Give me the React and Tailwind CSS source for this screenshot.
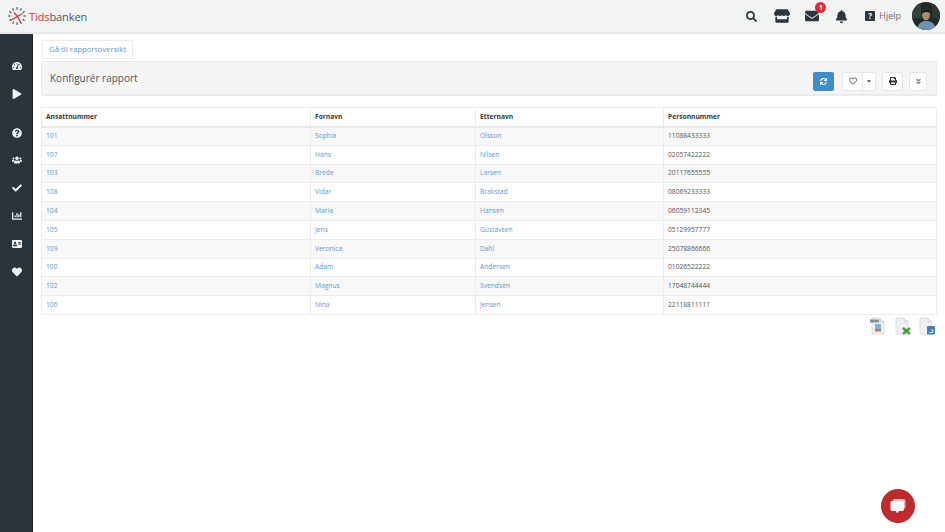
import React from 'react';
import {
  FaSearch, FaStore, FaEnvelope, FaBell, FaTachometerAlt, FaPlay, FaQuestionCircle, FaUsers,
  FaCheck, FaChartBar, FaAddressCard, FaHeart, FaSync, FaRegHeart, FaCaretDown, FaPrint, FaAngleDoubleDown,
} from 'react-icons/fa';

const rows = [
  ['101', 'Sophia', 'Olsson', '11088433333'],
  ['107', 'Hans', 'Nilsen', '02057422222'],
  ['103', 'Brede', 'Larsen', '20117655555'],
  ['108', 'Vidar', 'Brakstad', '08069233333'],
  ['104', 'Maria', 'Hansen', '06059112345'],
  ['105', 'Jens', 'Gustavsen', '05129957777'],
  ['109', 'Veronica', 'Dahl', '25078866666'],
  ['100', 'Adam', 'Andersen', '01026522222'],
  ['102', 'Magnus', 'Svendsen', '17048744444'],
  ['106', 'Nina', 'Jensen', '22118811111'],
];

const Logo = () => (
  <svg width="18" height="18" viewBox="0 0 18 18" className="shrink-0">
    {[0, 30, 60, 90, 120, 150, 180, 210, 240, 270, 300, 330].map((a) => (
      <rect key={a} x="8.4" y="0.2" width="1.2" height="2.4" fill="#4b5157" transform={`rotate(${a} 9 9)`} />
    ))}
    <path d="M2.5 13.5 L14.5 6.5 M9.5 9.5 L12.5 15 M9.5 9.5 L6 5.5" stroke="#d8323c" strokeWidth="1.3" fill="none" />
  </svg>
);

const Avatar = () => (
  <svg width="28" height="28" viewBox="0 0 28 28" className="rounded-full shrink-0">
    <rect width="28" height="28" fill="#1f2a26" />
    <rect x="0" y="0" width="9" height="16" fill="#33423a" />
    <rect x="20" y="2" width="8" height="14" fill="#2b3a30" />
    <path d="M5 28 C6 21 10 19 14 19 C19 19 23 21 24 28 Z" fill="#6d94b4" />
    <ellipse cx="14" cy="13" rx="4" ry="5.2" fill="#a98a72" />
    <path d="M9.6 12 C9.5 7 18 6.5 18.6 11 C16 9.5 12 9.5 9.6 12 Z" fill="#18140f" />
  </svg>
);

const FileIcon = ({ children, fold = '#e4e6e8' }) => (
  <svg width="19" height="18" viewBox="0 0 19 18">
    <path d="M3 1 H11 L15 5 V17 H3 Z" fill="#eef0f1" stroke="#d5d8da" strokeWidth="0.8" />
    <path d="M11 1 V5 H15" fill={fold} stroke="#c9cdd0" strokeWidth="0.6" />
    {children}
  </svg>
);

const SideIcon = ({ icon: Icon, className = '' }) => (
  <div className={`flex justify-center text-[#f2f3f4] pl-px ${className}`}>
    <Icon className="text-[10px]" />
  </div>
);

const ToolBtn = ({ children, className = '' }) => (
  <button className={`h-[19px] flex items-center justify-center bg-white border border-[#e6e6e6] rounded-[2px] text-[#55595c] ${className}`}>
    {children}
  </button>
);

export default function App() {
  return (
    <div className="w-[945px] h-[532px] overflow-hidden bg-white flex flex-col relative font-['Open_Sans',sans-serif] text-[7px]">
      <header className="h-[34px] shrink-0 bg-[#f2f3f3] border-b-2 border-[#e7e7e7] flex items-center pl-[8px] pr-[5px]">
        <Logo />
        <div className="ml-[3px] text-[11px] font-medium leading-none tracking-[-0.1px]">
          <span className="text-[#d8323c]">Tids</span>
          <span className="text-[#4f555b]">banken</span>
        </div>
        <div className="ml-auto flex items-center text-[#2a3640]">
          <FaSearch className="text-[11px]" />
          <FaStore className="text-[16px] ml-[17px]" />
          <div className="relative ml-[15px]">
            <FaEnvelope className="text-[14px]" />
            <span className="absolute -top-[7px] -right-[7px] w-[11px] h-[11px] rounded-full bg-[#e02a3a] text-white text-[6.5px] font-bold flex items-center justify-center">1</span>
          </div>
          <FaBell className="text-[13px] ml-[16px]" />
          <div className="ml-[17px] w-[10px] h-[10px] rounded-[1px] bg-[#2a3640] text-white text-[8px] font-bold leading-none flex items-center justify-center">?</div>
          <span className="ml-[4px] text-[9px] text-[#68717a]">Hjelp</span>
          <div className="ml-[11px]"><Avatar /></div>
        </div>
      </header>

      <div className="flex flex-1 min-h-0">
        <aside className="w-[33px] shrink-0 bg-[#29343d] border-r border-[#1f272e] pt-[27px]">
          <SideIcon icon={FaTachometerAlt} />
          <SideIcon icon={FaPlay} className="mt-[18px]" />
          <SideIcon icon={FaQuestionCircle} className="mt-[29px]" />
          <SideIcon icon={FaUsers} className="mt-[17px]" />
          <SideIcon icon={FaCheck} className="mt-[18px]" />
          <SideIcon icon={FaChartBar} className="mt-[18px]" />
          <SideIcon icon={FaAddressCard} className="mt-[18px]" />
          <SideIcon icon={FaHeart} className="mt-[18px]" />
        </aside>

        <main className="flex-1 min-w-0 pl-[8px] pr-[8px] pt-[6px]">
          <button className="h-[19px] px-[6px] ml-[1px] bg-white border border-[#ececec] rounded-[1px] text-[7.8px] text-[#6596d2] leading-none">
            Gå til rapportoversikt
          </button>

          <div className="h-[35px] mt-[2px] bg-[#f5f5f5] border border-[#ebebeb] border-b-2 rounded-[2px] flex items-center pl-[8px] pr-[9px]">
            <h1 className="text-[10px] text-[#555] leading-none">Konfigurér rapport</h1>
            <div className="ml-auto flex items-center mt-[6px]">
              <button className="w-[21px] h-[19px] bg-[#3d8ccb] rounded-[2px] flex items-center justify-center text-white">
                <FaSync className="text-[7px]" />
              </button>
              <ToolBtn className="ml-[8px] w-[21px] rounded-r-none"><FaRegHeart className="text-[8px]" /></ToolBtn>
              <ToolBtn className="w-[14px] -ml-px rounded-l-none"><FaCaretDown className="text-[6px] text-[#333]" /></ToolBtn>
              <ToolBtn className="ml-[6px] w-[21px]"><FaPrint className="text-[8px] text-[#333]" /></ToolBtn>
              <ToolBtn className="ml-[6px] w-[18px]"><FaAngleDoubleDown className="text-[7px] text-[#777]" /></ToolBtn>
            </div>
          </div>

          <table className="mt-[11px] w-full table-fixed border-collapse border border-[#ececec] text-[6.7px] leading-none">
            <colgroup>
              <col className="w-[269px]" />
              <col className="w-[165px]" />
              <col className="w-[188px]" />
              <col />
            </colgroup>
            <thead>
              <tr className="h-[19px] border-b-2 border-[#e8e8e8] text-left">
                {['Ansattnummer', 'Fornavn', 'Etternavn', 'Personnummer'].map((h) => (
                  <th key={h} className="px-[4px] pt-[1px] font-bold text-[#3a3a3a] border-r border-[#ececec]">{h}</th>
                ))}
              </tr>
            </thead>
            <tbody>
              {rows.map((r, i) => (
                <tr key={r[0]} className={`h-[18.8px] border-b border-[#ececec] ${i % 2 === 0 ? 'bg-[#f8f8f8]' : 'bg-white'}`}>
                  <td className="px-[4px] pt-[0.5px] text-[#6596d2] border-r border-[#ececec]">{r[0]}</td>
                  <td className="px-[4px] pt-[0.5px] text-[#6596d2] border-r border-[#ececec]">{r[1]}</td>
                  <td className="px-[4px] pt-[0.5px] text-[#6596d2] border-r border-[#ececec]">{r[2]}</td>
                  <td className="px-[4px] pt-[0.5px] text-[#555]">{r[3]}</td>
                </tr>
              ))}
            </tbody>
          </table>

          <div className="flex justify-end gap-[5px] mt-[2px] mr-[1px]">
            <FileIcon>
              <rect x="1" y="2.5" width="9" height="3" fill="#8a8f92" />
              <rect x="6" y="7" width="6" height="5" fill="#7fb4de" />
              <rect x="6" y="12" width="6" height="2.5" fill="#b97c5c" />
            </FileIcon>
            <FileIcon>
              <path d="M10 11 L17 17 M17 11 L10 17" stroke="#4c9a3c" strokeWidth="2.4" />
            </FileIcon>
            <FileIcon>
              <rect x="10" y="9" width="8" height="8.5" rx="0.8" fill="#3d80c4" />
              <path d="M12 15.5 H16 V13 H14" stroke="#dbe9f6" strokeWidth="1" fill="none" />
            </FileIcon>
          </div>
        </main>
      </div>

      <button className="absolute left-[881px] top-[489px] w-[34px] h-[34px] rounded-full bg-[#bf2a2e] flex items-center justify-center">
        <svg width="18" height="17" viewBox="0 0 18 17">
          <rect x="3.5" y="1" width="13" height="10" rx="2" fill="#e9b4b5" />
          <path d="M3 3 H13.5 A1.6 1.6 0 0 1 15 4.6 V11.5 A1.6 1.6 0 0 1 13.5 13 H10 L8.2 15.2 L6.5 13 H3 A1.6 1.6 0 0 1 1.5 11.5 V4.6 A1.6 1.6 0 0 1 3 3 Z" fill="#fff" />
        </svg>
      </button>
    </div>
  );
}
